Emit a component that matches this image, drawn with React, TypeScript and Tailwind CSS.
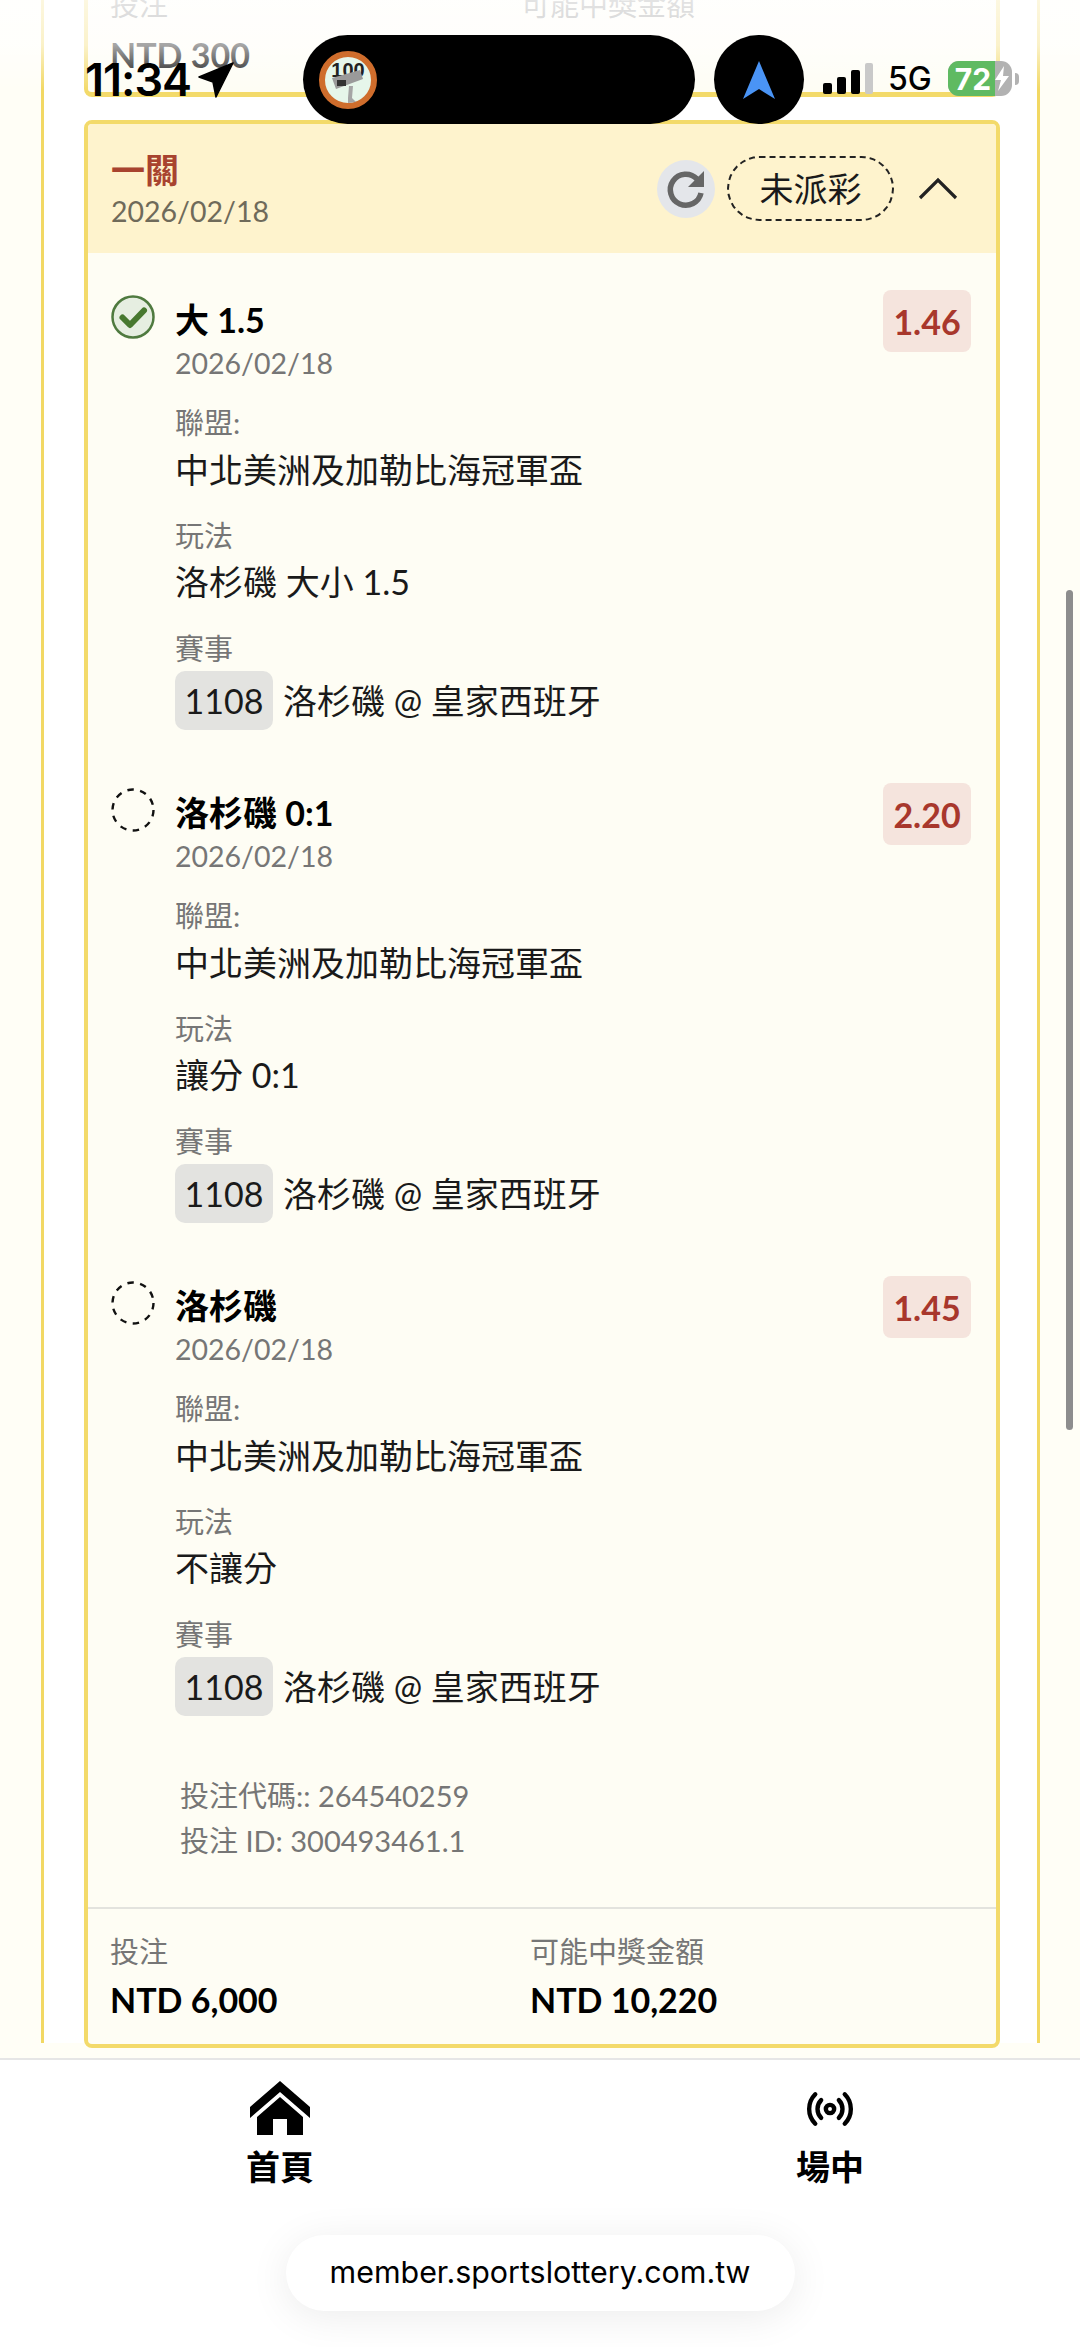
import React from "react";
import { Radio } from "lucide-react";

const CheckIcon = () => (
  <svg width="46" height="46" viewBox="0 0 46 46" className="block">
    <circle cx="23" cy="23" r="20.5" fill="#e6eee1" stroke="#4f7a3f" strokeWidth="2.5" />
    <path d="M12.5 23.5 L20 31 L34 16.5" fill="none" stroke="#47782f" strokeWidth="6" strokeLinecap="round" strokeLinejoin="round" />
  </svg>
);

const DashedIcon = () => (
  <svg width="46" height="46" viewBox="0 0 46 46" className="block">
    <circle cx="23" cy="23" r="20.5" fill="none" stroke="#111" strokeWidth="2.4" strokeDasharray="6.5 6.4" />
  </svg>
);

const Row = ({ done, title, play, odds }: { done?: boolean; title: string; play: string; odds: string }) => (
  <div className="relative pl-[87px]">
    <div className="absolute left-[22px] top-[-4px]">{done ? <CheckIcon /> : <DashedIcon />}</div>
    <div className="absolute right-[25px] top-[-8px] w-[88px] h-[62px] rounded-lg bg-[#f5e4dd] text-[#a8372c] font-bold text-[34px] flex items-center justify-center">
      {odds}
    </div>
    <div className="text-[34px] leading-[44px] font-bold text-black">{title}</div>
    <div className="text-[28.5px] leading-[42px] text-[#767676]">2026/02/18</div>
    <div className="mt-[19px] text-[29px] leading-[40px] text-[#767676]">聯盟:</div>
    <div className="mt-[2px] text-[34px] leading-[50px] text-[#1a1a1a]">中北美洲及加勒比海冠軍盃</div>
    <div className="mt-[21px] text-[29px] leading-[40px] text-[#767676]">玩法</div>
    <div className="mt-[1px] text-[34px] leading-[50px] text-[#1a1a1a]">{play}</div>
    <div className="mt-[22px] text-[29px] leading-[40px] text-[#767676]">賽事</div>
    <div className="mt-[2px] flex items-center h-[59px] text-[34px] text-[#1a1a1a]">
      <span className="w-[98px] h-[59px] rounded-[10px] bg-[#e3e3e0] flex items-center justify-center">1108</span>
      <span className="ml-[10px]">洛杉磯 @ 皇家西班牙</span>
    </div>
  </div>
);

const CameraBadge = () => (
  <svg width="60" height="60" viewBox="0 0 60 60" className="block">
    <circle cx="30" cy="30" r="26" fill="#e6f6ea" stroke="#cf6d2c" strokeWidth="6" />
    <text x="30" y="27" textAnchor="middle" fontSize="20" fontWeight="700" fill="#222" fontFamily="Liberation Sans, sans-serif">100</text>
    <path d="M14 28 L42 20 L45 29 L18 39 Z" fill="#9a9a9a" />
    <rect x="19" y="30" width="9" height="6" fill="#333" />
    <path d="M31 36 L35 36 L34 48 L38 52 L30 53 L30 48 Z" fill="#a5a5a5" />
  </svg>
);

const HomeIcon = () => (
  <svg width="60" height="54" viewBox="0 0 60 54" className="block">
    <path d="M30 0 L60 26 L60 37 L30 11 L0 37 L0 26 Z" fill="#000" />
    <path d="M7 36 L30 16 L53 36 L53 54 L37 54 L37 38 L23 38 L23 54 L7 54 Z" fill="#000" />
  </svg>
);

export default function App() {
  return (
    <div className="relative w-[1080px] h-[2347px] overflow-hidden bg-white font-['Lato','Noto_Sans_CJK_TC',sans-serif]">
      {/* scrolling page */}
      <div className="h-[2058px] overflow-hidden bg-[#fffef6] pl-[41px] pr-[40px]">
        <div className="h-full bg-white border-x-[3px] border-[#f2d863] pl-[40px] pr-[37px]">
          <div className="-mt-[15px] h-[112px] bg-[#fefdf4] border-x-4 border-b-[5px] border-[#f3da6a] rounded-b-lg">
            <div className="flex pl-[22px]">
              <div className="w-[411px]">
                <div className="text-[29px] leading-[40px] text-[#767676]">投注</div>
                <div className="mt-[8px] text-[34px] leading-[44px] font-bold text-black">NTD 300</div>
              </div>
              <div className="text-[29px] leading-[40px] text-[#767676]">可能中獎金額</div>
            </div>
          </div>

          <div className="mt-[23px] border-4 border-[#f3da6a] rounded-lg bg-[#fefdf4] overflow-hidden">
            <div className="h-[129px] bg-[#fef3cd] flex items-center pl-[23px] pr-[36px]">
              <div className="flex-1">
                <div className="mt-[3px] text-[34px] leading-[41px] font-bold text-[#a8432f]">一關</div>
                <div className="text-[28.5px] leading-[42px] text-[#6f6a5a]">2026/02/18</div>
              </div>
              <div className="w-[58px] h-[58px] rounded-full bg-[#e4e6ea] flex items-center justify-center">
                <svg width="46" height="46" viewBox="0 0 46 46">
                  <path d="M34 13 A15.5 15.5 0 1 0 38 27" fill="none" stroke="#666" strokeWidth="5.5" />
                  <path d="M41 5 L41 21 L25 21 Z" fill="#666" />
                </svg>
              </div>
              <div className="ml-[12px] w-[167px] h-[65px] rounded-full border-2 border-dashed border-[#222] flex items-center justify-center text-[34px] text-[#1a1a1a]">
                未派彩
              </div>
              <svg width="44" height="30" viewBox="0 0 44 30" className="ml-[22px]">
                <path d="M4 24 L22 6 L40 24" fill="none" stroke="#222" strokeWidth="3.2" />
              </svg>
            </div>

            <div className="pt-[45px] flex flex-col gap-[61px]">
              <Row done title="大 1.5" play="洛杉磯 大小 1.5" odds="1.46" />
              <Row title="洛杉磯 0:1" play="讓分 0:1" odds="2.20" />
              <Row title="洛杉磯" play="不讓分" odds="1.45" />
            </div>

            <div className="mt-[57px] pl-[92px] text-[29px] leading-[45px] text-[#767676]">
              <div>投注代碼:: 264540259</div>
              <div>投注 ID: 300493461.1</div>
            </div>

            <div className="mt-[44px] border-t-2 border-[#e3e3de] pt-[23px] h-[137px]">
              <div className="flex pl-[22px]">
                <div className="w-[420px]">
                  <div className="text-[29px] leading-[40px] text-[#767676]">投注</div>
                  <div className="mt-[6px] text-[34px] leading-[44px] font-bold text-black">NTD 6,000</div>
                </div>
                <div>
                  <div className="text-[29px] leading-[40px] text-[#767676]">可能中獎金額</div>
                  <div className="mt-[6px] text-[34px] leading-[44px] font-bold text-black">NTD 10,220</div>
                </div>
              </div>
            </div>
          </div>
        </div>
      </div>

      {/* bottom navigation */}
      <div className="border-t-2 border-[#e6e6e6] bg-white h-[289px]">
        <div className="flex justify-between pl-[220px] pr-[190px] pt-[21px]">
          <div className="w-[120px] flex flex-col items-center">
            <div className="h-[54px]"><HomeIcon /></div>
            <div className="mt-[7px] text-[34px] leading-[50px] font-bold text-black">首頁</div>
          </div>
          <div className="w-[120px] flex flex-col items-center">
            <div className="h-[54px] flex items-center pt-[2px]">
              <Radio size={50} strokeWidth={2.1} color="#000" />
            </div>
            <div className="mt-[7px] text-[34px] leading-[50px] font-bold text-black">場中</div>
          </div>
        </div>
        <div className="mt-[43px] mx-auto w-[509px] h-[76px] rounded-full bg-white shadow-[0_6px_40px_rgba(0,0,0,0.08)] flex items-center justify-center text-[30.4px] text-black font-['Inter',sans-serif]">
          member.sportslottery.com.tw
        </div>
      </div>

      {/* fade under the status bar */}
      <div className="absolute left-0 top-0 w-full h-[90px] bg-gradient-to-b from-white/80 via-white/65 to-white/0" />

      {/* status bar */}
      <div className="absolute left-0 top-[35px] w-full h-[89px] flex items-center pl-[85px] font-['Inter',sans-serif] text-black">
        <div className="w-[218px] flex items-center">
          <span className="text-[45px] font-semibold tracking-[-1px] leading-none">11:34</span>
          <svg width="36" height="36" viewBox="0 0 36 36" className="ml-[7px]">
            <path d="M35 1 L1 15 L15 20 L18 35 Z" fill="#000" stroke="#000" strokeWidth="1.5" strokeLinejoin="round" />
          </svg>
        </div>
        <div className="w-[392px] h-[89px] rounded-full bg-black flex items-center pl-[15px]">
          <CameraBadge />
        </div>
        <div className="ml-[19px] w-[90px] h-[89px] rounded-full bg-black flex items-center justify-center">
          <svg width="34" height="38" viewBox="0 0 34 38">
            <path d="M17 0 L33 38 L17 28 L1 38 Z" fill="#4a94f5" />
          </svg>
        </div>
        <div className="ml-[19px] -mt-[2px] h-[31px] flex items-end gap-[5px]">
          <div className="w-[9px] h-[11px] rounded-[2px] bg-black" />
          <div className="w-[9px] h-[17px] rounded-[2px] bg-black" />
          <div className="w-[9px] h-[24px] rounded-[2px] bg-black" />
          <div className="w-[8px] h-[31px] rounded-[2px] bg-[#c9c9c9]" />
        </div>
        <span className="ml-[15px] -mt-[2px] text-[32px] leading-none font-medium">5G</span>
        <div className="ml-[16px] -mt-[2px] w-[64px] h-[35px] rounded-[11px] overflow-hidden flex bg-[#b2b2b2]">
          <div className="w-[47px] h-full bg-[#5fba62] pl-[7px] flex items-center text-[30px] font-bold text-white leading-none">72</div>
          <svg width="17" height="35" viewBox="0 0 17 35">
            <path d="M9 5 L0 19 L6 19 L3 30 L14 15 L8 15 Z" fill="#fff" />
          </svg>
        </div>
        <div className="ml-[3px] -mt-[2px] w-[4px] h-[12px] rounded-r-full bg-[#b2b2b2]" />
      </div>

      {/* page scrollbar */}
      <div className="absolute left-[1066px] top-[590px] w-[7px] h-[840px] rounded-full bg-[#8d8d8d]" />
    </div>
  );
}
